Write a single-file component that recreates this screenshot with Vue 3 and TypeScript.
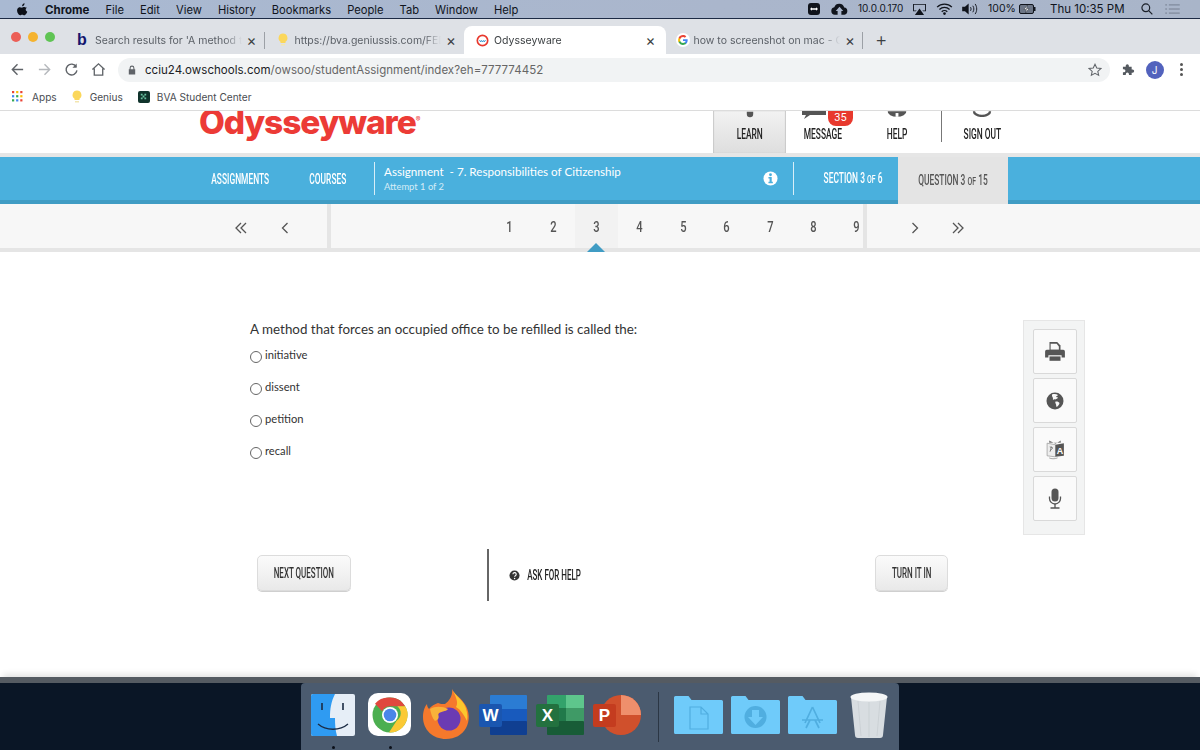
<template>
  <div class="screen">
    <div class="menubar">
      <svg class="apple" viewBox="0 0 14 16"><path d="M9.6 0c.1 1-.3 1.9-.8 2.6-.6.7-1.4 1.200-2.300 1.100-.1-.9.300-1.900.8-2.500C7.900.5 8.800.1 9.600 0zM12.700 5.400c-1 .6-1.600 1.500-1.600 2.700 0 1.300.8 2.300 2 2.800-.3.900-.7 1.700-1.300 2.500-.8 1.100-1.500 2-2.600 2-1 0-1.400-.6-2.600-.6s-1.600.6-2.600.6c-1.100 0-1.900-1-2.700-2.200C.2 11.500-.4 8.900.6 6.900c.6-1.100 1.700-1.900 3-1.900 1.100 0 2 .7 2.700.7s1.700-.8 3-.8c1.400.1 2.600.8 3.400 1.500z"/></svg>
      <span v-for="(m, i) in menus" :key="m" class="menu-item" :class="{ strong: i === 0 }">{{ m }}</span>
      <div class="status">
        <span class="tv"><svg viewBox="0 0 12 12" width="8" height="8"><path d="M0 6l3-2.500V5h6V3.500L12 6 9 8.500V7H3v1.500z" fill="#fff"/></svg></span>
        <svg class="st-cloud" viewBox="0 0 18 12"><path d="M4 12a4 4 0 0 1-.5-7.900A5.500 5.500 0 0 1 14 4.500 3.800 3.800 0 0 1 14.200 12H11V8h2L9 3.500 5 8h2v4z" fill="#10141c"/></svg>
        <span class="st-ip">10.0.0.170</span>
        <svg class="st-air" viewBox="0 0 16 13"><path d="M1 1h14v8h-3l-1-1h3V2H2v6h3L4 9H1z" fill="#10141c"/><path d="M8 6l5 7H3z" fill="#10141c"/></svg>
        <svg class="st-wifi" viewBox="0 0 18 13" fill="none" stroke="#10141c" stroke-width="1.400"><path d="M1 4.500a11.500 11.500 0 0 1 16 0M3.500 7a8 8 0 0 1 11 0M6 9.500a4.300 4.300 0 0 1 6 0"/><circle cx="9" cy="11.500" r=".8" fill="#10141c"/></svg>
        <svg class="st-vol" viewBox="0 0 18 13" fill="none" stroke="#10141c" stroke-width="1"><path d="M0 4h3l4-3.500v12L3 9H0z" fill="#10141c" stroke="none"/><path d="M9 4.500c.8 1.200.8 2.800 0 4M11.500 3c1.500 2 1.500 5 0 7M14 1c2.300 3.200 2.300 7.800 0 11"/></svg>
        <span class="st-pct">100%</span>
        <svg class="st-bat" viewBox="0 0 17 10"><rect x=".5" y=".5" width="14" height="9" rx="1.500" fill="#6d7686" stroke="#10141c"/><rect x="15" y="3" width="1.500" height="4" fill="#10141c"/><path d="M8.500 1L5 5.500h2.500L6.500 9 10 4.500H7.500z" fill="#fff" stroke="#10141c" stroke-width=".4"/></svg>
        <span class="st-time">Thu 10:35 PM</span>
        <svg class="st-search" viewBox="0 0 13 13" fill="none" stroke="#1a1f28" stroke-width="1.300"><circle cx="5.200" cy="5.200" r="4.200"/><path d="M8.300 8.300l4 4"/></svg>
        <svg class="st-list" viewBox="0 0 16 11" fill="none" stroke="#717b8c" stroke-width="1"><path d="M0 1h2M4 1h12M0 5.500h2M4 5.500h12M0 10h2M4 10h12"/></svg>
      </div>
    </div>

    <div class="tabstrip">
      <div class="traffic">
        <i class="light red"></i><i class="light yellow"></i><i class="light green"></i>
      </div>
      <div v-for="t in tabs" :key="t.title" class="tab" :class="{ active: t.active, sep: t.sep }">
        <span class="fav">
          <span v-if="t.icon === 'b'" class="fav-b">b</span>
          <svg v-else-if="t.icon === 'bulb'" viewBox="0 0 12 14" width="12" height="14"><path d="M6 .5a4.500 4.500 0 0 0-2.500 8.200V10h5V8.700A4.500 4.500 0 0 0 6 .5z" fill="#fbd75b"/><path d="M4 11h4v1.500H4z" fill="#f3e6b0"/></svg>
          <svg v-else-if="t.icon === 'ow'" viewBox="0 0 14 14" width="13" height="13"><circle cx="7" cy="7" r="5.600" fill="#fff" stroke="#e8392e" stroke-width="1.800"/><path d="M3.800 6.500l1.200 2 1-1.500 1 1.500 1-1.500 1 1.500 1.200-2" fill="none" stroke="#2a8fc9" stroke-width="1"/></svg>
          <svg v-else viewBox="0 0 48 48" width="14" height="14"><circle cx="24" cy="24" r="24" fill="#fff"/><path fill="#4285f4" d="M40 24.500c0-1.200-.1-2.300-.3-3.400H24v6.400h9c-.4 2.100-1.600 3.900-3.300 5v4.200h5.400c3.100-2.900 4.900-7.100 4.900-12.200z"/><path fill="#34a853" d="M24 41c4.500 0 8.300-1.500 11.100-4l-5.400-4.200c-1.500 1-3.400 1.600-5.700 1.600-4.400 0-8.100-3-9.400-6.900H9v4.300C11.800 37 17.500 41 24 41z"/><path fill="#fbbc05" d="M14.600 27.500c-.7-2-.7-4.900 0-7v-4.300H9a17 17 0 0 0 0 15.600z"/><path fill="#ea4335" d="M24 13.600c2.500 0 4.700.9 6.500 2.500l4.800-4.800C32.300 8.600 28.500 7 24 7c-6.500 0-12.200 4-15 9.200l5.600 4.300c1.300-3.900 5-6.900 9.400-6.900z"/></svg>
        </span>
        <span class="tab-title">{{ t.title }}</span>
        <span class="tab-close">×</span>
      </div>
      <span class="new-tab">+</span>
    </div>

    <div class="toolbar">
      <svg class="tb-icon" viewBox="0 0 16 16" fill="none" stroke="#5f6368" stroke-width="1.500"><path d="M14 8H2.500M8 2.500L2.500 8 8 13.500"/></svg>
      <svg class="tb-icon" viewBox="0 0 16 16" fill="none" stroke="#b5b8bc" stroke-width="1.500"><path d="M2 8h11.500M8 2.500L13.500 8 8 13.500"/></svg>
      <svg class="tb-icon" viewBox="0 0 16 16" fill="none" stroke="#5f6368" stroke-width="1.500"><path d="M13 5a5.800 5.800 0 1 0 .8 4"/><path d="M13.500 1.500V6H9" fill="#5f6368" stroke="none"/></svg>
      <svg class="tb-icon" viewBox="0 0 16 16" fill="none" stroke="#5f6368" stroke-width="1.400"><path d="M1.500 8L8 2l6.500 6M3.500 7v7h9V7"/></svg>
      <div class="omnibox">
        <svg class="lock" viewBox="0 0 10 12"><path d="M2 5V3.500a3 3 0 0 1 6 0V5h1v6.500H1V5zm1.300 0h3.400V3.500a1.700 1.700 0 0 0-3.400 0z" fill="#5f6368"/></svg>
        <span class="url"><b>cciu24.owschools.com</b>/owsoo/studentAssignment/index?eh=777774452</span>
        <svg class="star" viewBox="0 0 16 16" fill="none" stroke="#5f6368" stroke-width="1.200"><path d="M8 1.500l2 4.300 4.700.5-3.500 3.200 1 4.600L8 11.800l-4.200 2.300 1-4.600-3.500-3.200 4.700-.5z"/></svg>
      </div>
      <svg class="puzzle" viewBox="0 0 14 14"><path d="M1 4h3V3a1.700 1.700 0 0 1 3.400 0v1h3v3h1a1.700 1.700 0 0 1 0 3.400h-1V13H7.500v-1a1.700 1.700 0 0 0-3.400 0v1H1v-3h1a1.700 1.700 0 0 0 0-3.400H1z" fill="#555a60"/></svg>
      <span class="avatar">J</span>
      <span class="kebab"><i></i><i></i><i></i></span>
    </div>

    <div class="bookmarks">
      <span class="bm apps"><svg viewBox="0 0 12 12" width="11" height="11"><g v-for="c in appDots" :key="c.x + '-' + c.y"><rect :x="c.x" :y="c.y" width="2.400" height="2.400" :fill="c.f" /></g></svg>Apps</span>
      <span class="bm"><svg viewBox="0 0 12 14" width="12" height="14"><path d="M6 .5a4.500 4.500 0 0 0-2.500 8.200V10h5V8.700A4.500 4.500 0 0 0 6 .5z" fill="#fbd75b"/><path d="M4 11h4v1.500H4z" fill="#f3e6b0"/></svg>Genius</span>
      <span class="bm"><span class="bva"><svg viewBox="0 0 10 10" width="9" height="9"><path d="M2 2h2v2H2zM6 2h2v2H6zM4 4h2v2H4zM2 6h2v2H2zM6 6h2v2H6z" fill="#69c2a0"/></svg></span>BVA Student Center</span>
    </div>

    <header class="site-head">
      <div class="logo">Odysseyware<sup class="reg">®</sup></div>
      <nav class="site-nav">
        <div class="nav-item learn">
          <svg class="nav-top" viewBox="0 0 10 7" width="8" height="7"><path d="M1 0h8v3a4 4 0 0 1-8 0z" fill="#555"/></svg>
          <span class="cond">LEARN</span>
        </div>
        <div class="nav-item message">
          <svg class="nav-top msg" viewBox="0 0 26 8" width="26" height="8"><path d="M2 0h24v4H10L4 8l2-4H2z" fill="#555"/></svg>
          <span class="badge">35</span>
          <span class="cond">MESSAGE</span>
        </div>
        <div class="nav-item help">
          <svg class="nav-top" viewBox="0 0 20 6" width="19" height="6"><path d="M0 0h20a10 6 0 0 1-20 0z" fill="#555"/><rect x="8.500" y="2" width="3" height="4" fill="#fff"/></svg>
          <span class="cond">HELP</span>
        </div>
        <div class="nav-item signout">
          <svg class="nav-top" viewBox="0 0 20 6" width="19" height="6" fill="none" stroke="#555" stroke-width="2.500"><path d="M1.500 0a8.500 5 0 0 0 17 0"/></svg>
          <span class="cond">SIGN OUT</span>
        </div>
      </nav>
    </header>

    <div class="blue-bar">
      <a class="blue-link b-assign"><span class="cond">ASSIGNMENTS</span></a>
      <a class="blue-link b-courses"><span class="cond">COURSES</span></a>
      <div class="assign-title">
        <div class="at-main">Assignment&nbsp; - 7. Responsibilities of Citizenship</div>
        <div class="at-sub">Attempt 1 of 2</div>
      </div>
      <svg class="info" viewBox="0 0 16 16"><circle cx="8" cy="8" r="7.500" fill="#fff"/><circle cx="8" cy="4" r="1.500" fill="#4ab0dd"/><path d="M5.800 6.500H9.300v5h1.200v1.500H5.800v-1.500H7v-3.500H5.800z" fill="#4ab0dd"/></svg>
      <a class="blue-link b-section"><span class="cond">SECTION 3 <small>OF</small> 6</span></a>
      <a class="blue-link b-question"><span class="cond">QUESTION 3 <small>OF</small> 15</span></a>
    </div>

    <div class="pager">
      <div class="pg-side left">
        <svg class="chev" viewBox="0 0 14 14" fill="none" stroke="#555" stroke-width="1.300"><path d="M7 2L2 7l5 5M12 2L7 7l5 5"/></svg>
        <svg class="chev" viewBox="0 0 14 14" fill="none" stroke="#555" stroke-width="1.300"><path d="M9.500 2l-5 5 5 5"/></svg>
      </div>
      <div class="pg-nums">
        <span v-for="n in 9" :key="n" class="pg-num" :class="{ current: n === 3 }"><span class="cond">{{ n }}</span></span>
      </div>
      <div class="pg-side right">
        <svg class="chev" viewBox="0 0 14 14" fill="none" stroke="#555" stroke-width="1.300"><path d="M4.500 2l5 5-5 5"/></svg>
        <svg class="chev" viewBox="0 0 14 14" fill="none" stroke="#555" stroke-width="1.300"><path d="M2 2l5 5-5 5M7 2l5 5-5 5"/></svg>
      </div>
      <i class="pointer"></i>
    </div>

    <main class="content">
      <div class="question-row">
        <div class="question">
          <p class="q-text">A method that forces an occupied office to be refilled is called the:</p>
          <label v-for="o in options" :key="o" class="option"><i class="radio"></i><span>{{ o }}</span></label>
        </div>
        <aside class="tools">
          <div class="tool">
            <svg viewBox="0 0 20 20" width="22" height="22"><path d="M5 1h7l3 3v5H5z" fill="#555"/><path d="M6 2.500h5.500L13.500 5v3h-7.500z" fill="#f8f8f8"/><path d="M2.500 8H17.500a1.500 1.500 0 0 1 1.500 1.500V15h-3v-2H4v2H1V9.500A1.500 1.500 0 0 1 2.500 8z" fill="#555"/><path d="M5 14h10v4H5z" fill="#555"/></svg>
          </div>
          <div class="tool">
            <svg viewBox="0 0 18 18" width="18" height="18"><circle cx="9" cy="9" r="8.500" fill="#555"/><path d="M6 2.500c2-.8 4.500-.5 6 .4-.5 1-1.500.8-2 1.600.3.900 1.500.4 2 1.300-.4 1-1.800.8-2.400 1.700-.8-.5-2-.2-2.600.5-.3-1 .3-2-.3-2.600C6 4.500 5.800 3.500 6 2.500zM9.500 9.500c1.500-.4 3.500.2 4 1.500-.2 1.500-1.500 3.200-2.800 4-.8-1-.3-2.500-1-3.300-.5-.7-.6-1.500-.2-2.200z" fill="#f8f8f8"/></svg>
          </div>
          <div class="tool">
            <svg viewBox="0 0 20 20" width="21" height="21"><path d="M2 4l8 1.500V17l-8-1z" fill="#eee" stroke="#999" stroke-width=".7"/><path d="M10 5.500L18 4v12l-8 1z" fill="#555"/><path d="M4 1.500l6 3 5-3v2H4z" fill="#777"/><text x="11.200" y="14" font-size="8.500" font-weight="700" font-family="Liberation Sans, sans-serif" fill="#fff">A</text><path d="M4.500 7.500l3 1M6 7l-1 5M4.500 11.500l3-3" stroke="#777" stroke-width=".8" fill="none"/><path d="M4 18c2 1 5 1.200 8 0" stroke="#999" fill="none" stroke-width=".8"/></svg>
          </div>
          <div class="tool">
            <svg viewBox="0 0 20 22" width="20" height="23"><rect x="6.500" y="1" width="7" height="13" rx="3.500" fill="#555"/><path d="M4.500 9v2a5.500 5.500 0 0 0 11 0V9" fill="none" stroke="#555" stroke-width="1.300"/><path d="M10 16.500V20M5.500 20.500h9" stroke="#555" stroke-width="1.300"/></svg>
          </div>
        </aside>
      </div>
      <div class="actions">
        <button class="btn next"><span class="cond">NEXT QUESTION</span></button>
        <i class="action-rule"></i>
        <div class="ask">
          <svg viewBox="0 0 12 12" width="11" height="11"><circle cx="6" cy="6" r="5.500" fill="#333"/><path d="M4.300 4.700a1.800 1.800 0 1 1 2.700 1.500c-.6.400-.9.600-.9 1.200" fill="none" stroke="#fff" stroke-width="1.200"/><circle cx="6.100" cy="9.200" r=".8" fill="#fff"/></svg>
          <span class="ask-label"><span class="cond">ASK FOR HELP</span></span>
        </div>
        <button class="btn turnin"><span class="cond">TURN IT IN</span></button>
      </div>
    </main>

    <footer class="desktop">
      <div class="dock">
        <svg class="d-finder" viewBox="0 0 44 42"><rect width="44" height="42" rx="2" fill="#e6eef7"/><path d="M2 0h22c-4 8-5 15-5 24h5c0 6 .3 12 2 18H2a2 2 0 0 1-2-2V2a2 2 0 0 1 2-2z" fill="#2f9bf2"/><path d="M11 9v7M32 9v7" stroke="#1b2b44" stroke-width="1.600"/><path d="M7 30c8 7 22 7 30 0" stroke="#1b2b44" stroke-width="1.300" fill="none"/></svg>
        <div class="d-chrome">
          <svg viewBox="0 0 36 36" width="36" height="36"><circle cx="18" cy="18" r="17.500" fill="#4caf50"/><path d="M18 .5a17.500 17.500 0 0 1 15.200 8.800H18a8.700 8.700 0 0 0-7.800 5L3 6.700A17.500 17.500 0 0 1 18 .5z" fill="#e0483e"/><path d="M33.200 9.300A17.500 17.500 0 0 1 17 35.500l7.800-12a8.700 8.700 0 0 0 .5-14.200z" fill="#fbc935"/><circle cx="18" cy="18" r="8" fill="#fff"/><circle cx="18" cy="18" r="6.300" fill="#4a86e8"/></svg>
        </div>
        <svg class="d-fox" viewBox="0 0 48 50"><path d="M30 0c2 5 7 7 12 14 6 8 6 18 2 25-4 7-11 11-20 11C11 50 1 41 1 28c0-6 2-11 4-13 0 2 1 4 2 5 2-3 6-5 9-6 2 1 4 1 7 1 4-3 8-8 7-15z" fill="#f5792c"/><path d="M30 0c3 6 7 8 12 15 3 5 4 12 3 17-3-6-6-11-11-14C37 13 33 6 30 0z" fill="#fcc72d"/><circle cx="27" cy="30" r="11.500" fill="#6b3bb3"/><path d="M8 20c5-3 12-3 18 0-2 3-8 2-10 5 2 5-1 6-3 7-3-3-4-8-5-12z" fill="#f9b23a"/></svg>
        <div class="d-office">
          <svg viewBox="0 0 48 40" width="48" height="40"><rect x="11" width="37" height="14" rx="1" fill="#2b7cd3"/><rect x="11" y="13" width="37" height="14" fill="#185abd"/><rect x="11" y="13" width="37" height="1" fill="#2b7cd3"/><rect x="11" y="26" width="37" height="14" rx="1" fill="#103f91"/><rect y="9" width="23" height="23" rx="2" fill="#1a56b0"/><text x="11.500" y="26" text-anchor="middle" class="d-letter">W</text></svg>
        </div>
        <div class="d-office">
          <svg viewBox="0 0 48 40" width="48" height="40"><rect x="11" width="37" height="14" rx="1" fill="#33a36b"/><rect x="11" y="13" width="37" height="14" fill="#21794a"/><rect x="30" width="18" height="14" fill="#5ec68c"/><rect x="30" y="13" width="18" height="14" fill="#3f9a66"/><rect x="11" y="26" width="37" height="14" rx="1" fill="#185c37"/><rect y="9" width="23" height="23" rx="2" fill="#23713f"/><text x="11.500" y="26" text-anchor="middle" class="d-letter">X</text></svg>
        </div>
        <div class="d-office">
          <svg viewBox="0 0 48 40" width="48" height="40"><circle cx="28" cy="20" r="20" fill="#d0502c"/><path d="M28 0a20 20 0 0 1 20 20H28z" fill="#ef8f6c"/><rect y="9" width="23" height="23" rx="2" fill="#c43c1f"/><text x="11.500" y="26" text-anchor="middle" class="d-letter">P</text></svg>
        </div>
        <i class="d-rule"></i>
        <svg v-for="f in folders" :key="f" class="d-folder" viewBox="0 0 49 38">
          <path d="M1.500 0h13l3 4H47.500A1.500 1.500 0 0 1 49 5.500v31a1.500 1.500 0 0 1-1.500 1.500h-46A1.500 1.500 0 0 1 0 36.500v-35A1.500 1.500 0 0 1 1.500 0z" fill="#6fcbfa"/>
          <path v-if="f === 'docs'" d="M16 11h11l7 7v15H16z M27 11v7h7" fill="none" stroke="#50aee0" stroke-width="1.200"/>
          <g v-else-if="f === 'down'"><circle cx="24.500" cy="21" r="11" fill="#50aee0"/><path d="M21 14h7v7h4l-7.500 8L17 21h4z" fill="#6fcbfa"/></g>
          <path v-else d="M24.500 11L17 27M24.500 11L32 27M14 24h21M22 24l-4 8M27 24l4 8" fill="none" stroke="#50aee0" stroke-width="1.700"/>
        </svg>
        <svg class="d-trash" viewBox="0 0 38 46"><path d="M1 5h36l-4 38a3 3 0 0 1-3 3H8a3 3 0 0 1-3-3z" fill="#d8dde1"/><ellipse cx="19" cy="5" rx="18.500" ry="4.500" fill="#f4f6f7"/><path d="M8 9l3 35M19 10v35M30 9l-3 35" stroke="#c5cbd0" stroke-width=".7"/></svg>
        <i class="run-dot d1"></i>
        <i class="run-dot d2"></i>
      </div>
    </footer>
  </div>
</template>

<script setup lang="ts">
interface BrowserTab {
  title: string
  icon: 'b' | 'bulb' | 'ow' | 'g'
  active?: boolean
  sep?: boolean
}

const menus = ['Chrome', 'File', 'Edit', 'View', 'History', 'Bookmarks', 'People', 'Tab', 'Window', 'Help']

const tabs: BrowserTab[] = [
  { title: "Search results for 'A method that forces", icon: 'b', sep: true },
  { title: 'https://bva.geniussis.com/FEDashboard', icon: 'bulb' },
  { title: 'Odysseyware', icon: 'ow', active: true },
  { title: 'how to screenshot on mac - Google', icon: 'g', sep: true }
]

const options = ['initiative', 'dissent', 'petition', 'recall']
const folders = ['docs', 'down', 'apps']

const dotColors = ['#ea4335', '#fbbc05', '#ea4335', '#4285f4', '#34a853', '#fbbc05', '#34a853', '#4285f4', '#ea4335']
const appDots = dotColors.map((f, i) => ({ x: (i % 3) * 4.5, y: Math.floor(i / 3) * 4.5, f }))
</script>

<style scoped>
.screen {
  width: 1200px;
  height: 750px;
  overflow: hidden;
  display: flex;
  flex-direction: column;
  background: #fff;
  font-family: Inter, "Liberation Sans", sans-serif;
  color: #333;
}

/* no condensed face installed, so squeeze Roboto */
.cond {
  display: inline-block;
  flex: none;
  white-space: nowrap;
  font: 500 14px/16px Roboto, "Liberation Sans", sans-serif;
  transform: scaleX(.6);
}

/* mac menu bar */
.menubar {
  height: 18px;
  flex: none;
  display: flex;
  align-items: center;
  padding-left: 17px;
  background: linear-gradient(90deg, #a9b9d2, #aab6cc 60%, #a9b5c9);
  border-bottom: 1px solid #1c2a44;
  box-sizing: content-box;
  font-size: 11.2px;
  color: #10141c;
}
.apple { width: 11px; height: 13px; margin-right: 17px; fill: #0c1018; }
.menu-item { margin-right: 16px; white-space: nowrap; padding-top: 1px; }
.menu-item.strong { font-weight: 700; font-size: 11.5px; }
.status { margin-left: auto; display: flex; align-items: center; height: 18px; position: relative; width: 400px; }
.status > * { position: absolute; }
.tv { left: 8px; top: 3px; width: 12px; height: 12px; background: #10141c; border-radius: 3px; display: flex; align-items: center; justify-content: center; }
.st-cloud { left: 31px; top: 3px; width: 17px; height: 12px; }
.st-ip { left: 58px; top: 2px; font-size: 10px; }
.st-air { left: 112px; top: 3px; width: 15px; height: 12px; }
.st-wifi { left: 136px; top: 3px; width: 17px; height: 12px; }
.st-vol { left: 162px; top: 3px; width: 17px; height: 12px; }
.st-pct { left: 188px; top: 2px; font-size: 10.5px; }
.st-bat { left: 219px; top: 4px; width: 17px; height: 10px; }
.st-time { left: 250px; top: 2px; font-size: 11.5px; white-space: nowrap; }
.st-search { left: 341px; top: 3px; width: 12px; height: 12px; }
.st-list { left: 365px; top: 4px; width: 15px; height: 10px; }

/* chrome */
.tabstrip {
  height: 35px;
  flex: none;
  display: flex;
  align-items: flex-end;
  background: #dee1e6;
}
.traffic { width: 67px; flex: none; height: 35px; display: flex; align-items: center; gap: 7px; padding-left: 11px; box-sizing: border-box; }
.light { width: 10px; height: 10px; border-radius: 50%; }
.red { background: #ec5f57; }
.yellow { background: #f5b32f; }
.green { background: #5fc454; }
.tab {
  width: 199.500px;
  height: 28px;
  flex: none;
  display: flex;
  align-items: center;
  padding: 0 7px 0 10px;
  box-sizing: border-box;
  font-size: 10.5px;
  color: #5a5f66;
  position: relative;
}
.tab.sep::after { content: ""; position: absolute; right: 2px; top: 6px; height: 17px; width: 1px; background: #9ca0a6; }
.tab.active { background: #fff; border-radius: 8px 8px 0 0; color: #3c4043; margin-left: -2px; width: 201.500px; padding-left: 12px; }
.fav { width: 18px; flex: none; display: flex; align-items: center; }
.fav-b { font: 700 16px "Liberation Sans", sans-serif; color: #14156e; line-height: 1; }
.tab-title { flex: 1; min-width: 0; overflow: hidden; white-space: nowrap; -webkit-mask-image: linear-gradient(90deg, #000 88%, transparent); mask-image: linear-gradient(90deg, #000 88%, transparent); }
.tab-close { width: 16px; flex: none; text-align: center; font-size: 15px; line-height: 1; color: #3c4043; margin-left: 2px; }
.new-tab { font: 300 19px Inter, sans-serif; color: #3c4043; margin: 0 0 3px 10px; }
.toolbar { height: 31px; flex: none; display: flex; align-items: center; background: #fff; padding-left: 10px; }
.tb-icon { width: 15px; height: 15px; margin-right: 12px; flex: none; }
.omnibox {
  width: 992px;
  height: 24px;
  flex: none;
  border-radius: 12px;
  background: #f1f3f4;
  display: flex;
  align-items: center;
  padding: 0 8px 0 10px;
  box-sizing: border-box;
}
.lock { width: 8px; height: 10px; margin-right: 9px; flex: none; }
.url { font-size: 11.5px; color: #666; white-space: nowrap; letter-spacing: .03px; }
.url b { font-weight: 400; color: #202124; }
.star { width: 14px; height: 14px; margin-left: auto; }
.puzzle { width: 13px; height: 13px; margin-left: 12px; }
.avatar { width: 18px; height: 18px; margin-left: 10.500px; border-radius: 50%; background: #5262bd; color: #fff; font-size: 10px; display: flex; align-items: center; justify-content: center; }
.kebab { margin-left: 16.500px; display: flex; flex-direction: column; gap: 2px; }
.kebab i { width: 3px; height: 3px; border-radius: 50%; background: #555; }
.bookmarks {
  height: 26px;
  flex: none;
  display: flex;
  align-items: center;
  padding: 0 0 2px 12px;
  font-size: 10.1px;
  color: #4a4d52;
  background: #fff;
  border-bottom: 1px solid #dcdcdc;
  box-sizing: border-box;
}
.bm { display: flex; align-items: center; gap: 7px; margin-right: 15px; white-space: nowrap; }
.bm.apps { gap: 9px; margin-right: 14px; }
.bva { width: 12px; height: 12px; border-radius: 2px; background: #10332c; display: flex; align-items: center; justify-content: center; }

/* site header */
.site-head {
  height: 42px;
  flex: none;
  position: relative;
  overflow: hidden;
  display: flex;
  background: #fff;
}
.logo {
  margin: -13px 0 0 199px;
  height: 48px;
  width: 514px;
  font: 800 33.500px/48px Inter, "Liberation Sans", sans-serif;
  letter-spacing: -1.100px;
  color: #ec3b36;
  white-space: nowrap;
}
.reg { font-size: 7px; letter-spacing: 0; font-weight: 400; vertical-align: 12px; line-height: 0; }
.site-nav { display: flex; }
.nav-item {
  position: relative;
  height: 42px;
  padding-top: 15px;
  box-sizing: border-box;
  display: flex;
  justify-content: center;
  color: #222;
}
.nav-top { position: absolute; left: 50%; top: 0; transform: translateX(-50%); }
.learn { width: 73px; background: linear-gradient(#f2f2f2, #dedede); box-shadow: inset 1px 0 1px #c9c9c9, inset -1px 0 1px #c9c9c9; }
.message { width: 74px; }
.help { width: 74px; }
.signout { width: 82px; margin-left: 7px; }
.signout::before { content: ""; position: absolute; left: 0; top: 0; width: 1px; height: 31px; background: #777; }
.msg { left: 14px; transform: none; }
.badge {
  position: absolute;
  left: 42px;
  top: 0;
  width: 25px;
  height: 15px;
  border-radius: 0 0 8px 8px;
  background: #e8392e;
  color: #fff;
  text-align: center;
  font: 400 11px/14px Roboto, sans-serif;
}

/* blue bar */
.blue-bar {
  margin-top: 4px;
  height: 47px;
  flex: none;
  position: relative;
  display: flex;
  align-items: center;
  background: #4ab0dd;
  border-bottom: 4px solid #409cc4;
  box-sizing: border-box;
  color: #fff;
  box-shadow: 0 -4px 0 #e6e6e6;
}
.blue-link { display: flex; justify-content: center; align-items: center; white-space: nowrap; flex: none; }
.blue-link small { font-size: 11.500px; }
.b-assign { margin-left: 200px; width: 80px; margin-right: 19.500px; }
.b-courses { width: 56px; margin-right: 18.500px; }
.assign-title { width: 367px; flex: none; height: 33px; border-left: 1px solid #d8eef8; padding-left: 9px; box-sizing: border-box; }
.at-main { font: 400 11.650px/14px Lato, sans-serif; margin-top: 3px; white-space: nowrap; }
.at-sub { font: 400 9.400px/14px Lato, sans-serif; margin-top: 1px; color: #d5ecf7; }
.info { width: 15px; height: 15px; margin-left: 22px; flex: none; }
.b-section { margin-left: 15px; width: 105px; box-sizing: border-box; padding-left: 14px; border-left: 1px solid #d8eef8; height: 33px; }
.b-question {
  align-self: stretch;
  margin-bottom: -4px;
  width: 110px;
  background: #e4e4e4;
  color: #555;
}

/* pager */
.pager {
  height: 48px;
  flex: none;
  position: relative;
  display: flex;
  background: #f7f7f7;
  border-bottom: 4px solid #e5e5e5;
  box-sizing: border-box;
}
.pg-side { display: flex; align-items: center; padding-top: 3px; }
.pg-side.left { padding-left: 234px; gap: 30px; width: 93px; flex: none; border-right: 4px solid #e5e5e5; }
.pg-side.right { border-left: 4px solid #e5e5e5; padding-left: 41px; gap: 29px; }
.chev { width: 14px; height: 14px; }
.pg-nums { width: 532px; flex: none; display: flex; box-sizing: border-box; padding-left: 157px; overflow: hidden; }
.pg-num { width: 43.400px; flex: none; display: flex; justify-content: center; align-items: center; padding-top: 2px; box-sizing: border-box; }
.pg-num .cond { font-size: 15.500px; transform: scaleX(.72); color: #555; }
.pg-num.current { background: #f2f2f2; }
.pointer { position: absolute; left: 587px; bottom: -4px; width: 0; height: 0; border-left: 9px solid transparent; border-right: 9px solid transparent; border-bottom: 9px solid #409cc4; }

/* question */
.content { flex: 1; display: flex; flex-direction: column; min-height: 0; background: #fff; }
.question-row { display: flex; justify-content: space-between; padding: 68px 115px 0 250px; }
.question { flex: 1; }
.q-text { margin: 0 0 1px; font: 400 13.400px/18px Lato, sans-serif; color: #333; }
.option { display: flex; align-items: center; height: 32px; font: 400 11.200px Lato, sans-serif; color: #333; }
.option span { margin-bottom: 2px; }
.radio { width: 12px; height: 12px; border: 1px solid #666; border-radius: 50%; margin: 4px 3px 0 0; box-sizing: border-box; background: #fff; flex: none; }
.tools {
  width: 62px;
  height: 215px;
  box-sizing: border-box;
  background: #f3f4f4;
  border: 1px solid #e6e6e6;
  padding: 8px 7px 0 9px;
  display: flex;
  flex-direction: column;
  gap: 4px;
}
.tool {
  height: 45px;
  flex: none;
  background: #fafafa;
  border: 1px solid #d9d9d9;
  border-radius: 2px;
  box-sizing: border-box;
  display: flex;
  align-items: center;
  justify-content: center;
}
.actions { display: flex; align-items: center; height: 52px; margin-top: 14px; padding-left: 257px; }
.btn {
  height: 36px;
  padding: 0;
  border: 1px solid #dcdcdc;
  border-radius: 5px;
  background: linear-gradient(#fbfbfb, #e9e9e9);
  box-shadow: 0 1px 0 #cfcfcf;
  color: #333;
  margin-bottom: 4px;
  display: flex;
  justify-content: center;
  align-items: center;
  flex: none;
}
.btn .cond, .ask .cond { transform: scaleX(.57); }
.next { width: 94px; }
.turnin { width: 73px; margin-left: 293px; }
.action-rule { width: 2px; height: 52px; background: #666; margin-left: 136px; flex: none; }
.ask { display: flex; align-items: center; gap: 7px; margin-left: 20px; color: #222; width: 73px; flex: none; }
.ask svg { flex: none; }
.ask-label { width: 55px; flex: none; display: flex; justify-content: center; }

/* dock */
.desktop {
  height: 73px;
  flex: none;
  background: #0a1626;
  box-shadow: 0 -6px 6px -3px #e4e4e4;
  border-top: 6px solid #555b62;
  box-sizing: border-box;
  display: flex;
  justify-content: center;
}
.dock {
  position: relative;
  width: 598px;
  background: #4b5b6f;
  display: flex;
  align-items: flex-start;
  padding: 11px 0 0 10px;
  box-sizing: border-box;
  border-radius: 4px 4px 0 0;
}
.d-finder { width: 44px; height: 42px; flex: none; margin-right: 13px; }
.d-chrome { width: 43px; height: 43px; background: #fff; border-radius: 10px; flex: none; display: flex; align-items: center; justify-content: center; margin-right: 11px; margin-top: -1px; }
.d-fox { width: 48px; height: 50px; flex: none; margin: -5px 9px 0 0; }
.d-office { width: 48px; height: 40px; flex: none; margin: 1px 9px 0 0; }
.d-letter { font: 700 17px "Liberation Sans", sans-serif; fill: #fff; }
.d-rule { width: 1px; height: 50px; background: #2b3644; margin: -2px 15px 0 8px; flex: none; }
.d-folder { width: 49px; height: 38px; flex: none; margin: 2px 8px 0 0; }
.d-trash { width: 38px; height: 46px; flex: none; margin: -2px 0 0 5px; }
.run-dot { position: absolute; top: 63px; width: 3px; height: 3px; border-radius: 50%; background: #0a0f18; }
.d1 { left: 31px; }
.d2 { left: 88px; }
</style>

<style>
html, body { margin: 0; background: #fff; }
</style>
